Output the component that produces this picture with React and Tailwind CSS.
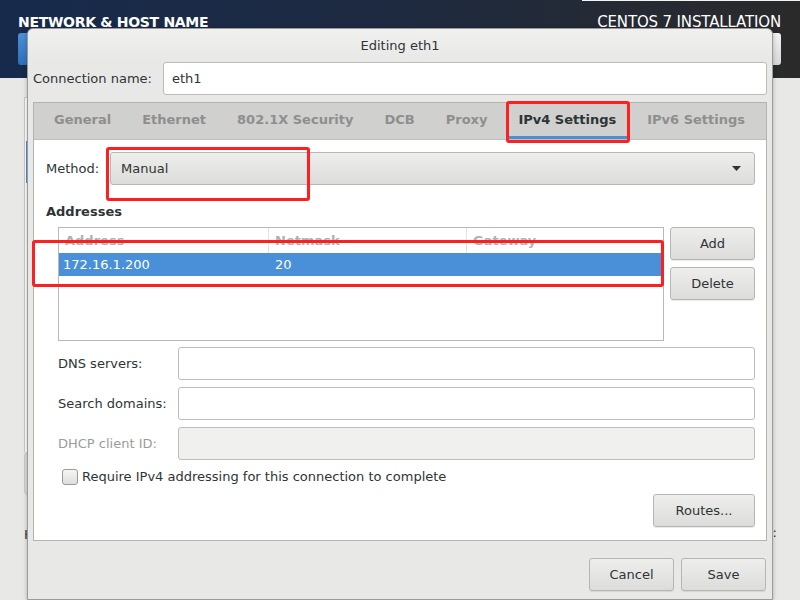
import { useState } from "react";

const tabs = ["General", "Ethernet", "802.1X Security", "DCB", "Proxy", "IPv4 Settings", "IPv6 Settings"];

function GtkButton({ children, className = "" }) {
    return (
        <button className={"h-[33px] rounded-[3px] border border-[#b6b6b3] bg-linear-to-b from-[#eeeeec] to-[#dcdcda] text-[13px] text-[#2e3436] shadow-[0_1px_0_rgba(0,0,0,0.08)] " + className}>
            {children}
        </button>
    );
}

function Field({ label, disabled }) {
    return (
        <div className="flex items-center h-[33px]">
            <span className={"w-[120px] text-[13px] " + (disabled ? "text-[#9a9c99]" : "text-[#2e3436]")}>{label}</span>
            <div className={"flex-1 h-full rounded-[3px] border border-[#bcbcb9] " + (disabled ? "bg-[#f0f0ef]" : "bg-white")}></div>
        </div>
    );
}

export default function App() {
    const [active] = useState("IPv4 Settings");

    return (
        <div className="relative w-[800px] h-[600px] overflow-hidden bg-[#e8e8e7] font-['DejaVu_Sans',sans-serif]">
            {/* anaconda header behind the dialog */}
            <div className="h-[78px] bg-linear-to-r from-[#172a4c] via-[#1e2a40] to-[#2a2a2a] flex flex-col">
                <div className="h-[1px] ml-[582px] bg-[#f4f4f4]"></div>
                <div className="flex justify-between pl-[18px] pr-[19px] pt-[12px]">
                    <div className="flex flex-col">
                        <span className="text-[14px] font-bold text-white leading-[18px] tracking-[-0.3px]">NETWORK &amp; HOST NAME</span>
                        <div className="mt-[2px] w-[80px] h-[32px] rounded-[3px] bg-linear-to-b from-[#4a90d9] to-[#2f6fb8]"></div>
                    </div>
                    <div className="flex flex-col items-end">
                        <span className="text-[15px] text-white leading-[18px] tracking-[-0.15px]">CENTOS 7 INSTALLATION</span>
                        <div className="mt-[2px] w-[80px] h-[32px] rounded-[3px] bg-linear-to-b from-[#f2f2f2] to-[#d6d6d6]"></div>
                    </div>
                </div>
            </div>

            {/* spoke content behind the dialog */}
            <div className="flex justify-between pl-[24px] pr-[23px] pt-[19px]">
                <div className="flex flex-col w-[60px]">
                    <div className="h-[355px] bg-white border-l border-t border-[#c9c9c7] flex flex-col">
                        <div className="mt-[43px] ml-[1px] w-[3px] h-[42px] bg-[#4a90d9]"></div>
                    </div>
                    <div className="h-[43px] rounded-[4px] bg-[#dcdcda] border border-[#c9c9c7]"></div>
                    <span className="mt-[30px] text-[13px] text-[#2e3436]">H</span>
                </div>
                <span className="self-end mb-[2px] text-[13px] text-[#2e3436]">:</span>
            </div>

            {/* Editing eth1 dialog */}
            <div className="absolute left-[27px] top-[28px] w-[746px] h-[572px] border border-[#9b9b99] rounded-t-[6px] bg-[#e8e8e7] flex flex-col shadow-[0_1px_4px_rgba(0,0,0,0.25)]">
                <div className="h-[33px] shrink-0 rounded-t-[6px] bg-linear-to-b from-[#f0f0ef] to-[#e8e8e7] flex items-center justify-center text-[13px] text-[#2e3436]">
                    Editing eth1
                </div>

                <div className="flex flex-col px-[5px]">
                    <div className="flex items-center h-[33px]">
                        <span className="w-[130px] text-[13px] text-[#2e3436]">Connection name:</span>
                        <div className="flex-1 h-full rounded-[3px] border border-[#bcbcb9] bg-white flex items-center px-[8px] text-[13px] text-[#2e3436]">eth1</div>
                    </div>

                    {/* notebook */}
                    <div className="mt-[7px] h-[439px] border border-[#b3b3b1] bg-white flex flex-col">
                        <div className="h-[37px] shrink-0 bg-[#d0d0cf] border-b border-[#c0c0be] flex gap-[7px] pl-[8px]">
                            {tabs.map((t) => (
                                <div
                                    key={t}
                                    className={
                                        "px-[12px] pt-[1px] flex items-center text-[13px] font-bold border-b-[3px] " +
                                        (t === active ? "text-[#2e3436] border-[#4a90d9]" : "text-[#8e8f8c] border-transparent")
                                    }
                                >
                                    {t}
                                </div>
                            ))}
                        </div>

                        <div className="flex flex-col pl-[12px] pr-[11px] pt-[12px]">
                            <div className="flex items-center h-[33px]">
                                <span className="w-[64px] text-[13px] text-[#2e3436]">Method:</span>
                                <div className="flex-1 h-full rounded-[3px] border border-[#b6b6b3] bg-linear-to-b from-[#eeeeec] to-[#dcdcda] flex items-center justify-between pl-[10px] pr-[13px] text-[13px] text-[#2e3436]">
                                    <span>Manual</span>
                                    <svg width="9" height="5" viewBox="0 0 9 5"><path d="M0 0h9L4.5 5z" fill="#2e3436" /></svg>
                                </div>
                            </div>

                            <span className="mt-[19px] text-[13px] font-bold text-[#2e3436] leading-[16px]">Addresses</span>

                            <div className="mt-[7px] ml-[12px] flex gap-[6px]">
                                <div className="w-[606px] h-[114px] border border-[#b8b8b6] bg-white flex flex-col">
                                    <div className="h-[25px] flex text-[13px] font-bold text-[#b0b1ae]">
                                        <div className="w-[210px] border-r border-[#e2e2e0] pl-[6px] flex items-center">Address</div>
                                        <div className="w-[198px] border-r border-[#e2e2e0] pl-[6px] flex items-center">Netmask</div>
                                        <div className="flex-1 pl-[6px] flex items-center">Gateway</div>
                                    </div>
                                    <div className="h-[23px] bg-[#4a90d9] flex text-[13px] text-white">
                                        <div className="w-[210px] pl-[4px] flex items-center">172.16.1.200</div>
                                        <div className="w-[198px] pl-[6px] flex items-center">20</div>
                                    </div>
                                </div>
                                <div className="w-[85px] flex flex-col gap-[7px]">
                                    <GtkButton>Add</GtkButton>
                                    <GtkButton>Delete</GtkButton>
                                </div>
                            </div>

                            <div className="mt-[6px] ml-[12px] flex flex-col gap-[7px]">
                                <Field label="DNS servers:" />
                                <Field label="Search domains:" />
                                <Field label="DHCP client ID:" disabled />
                            </div>

                            <label className="mt-[9px] ml-[16px] flex items-center gap-[4px] text-[13px] text-[#2e3436] h-[16px]">
                                <span className="w-[16px] h-[16px] rounded-[3px] border border-[#9a9a98] bg-linear-to-b from-[#f6f6f5] to-[#dededc]"></span>
                                Require IPv4 addressing for this connection to complete
                            </label>

                            <div className="mt-[9px] flex justify-end">
                                <GtkButton className="w-[102px]">Routes...</GtkButton>
                            </div>
                        </div>
                    </div>

                    <div className="mt-[17px] flex justify-end gap-[7px] pr-[1px]">
                        <GtkButton className="w-[85px]">Cancel</GtkButton>
                        <GtkButton className="w-[85px]">Save</GtkButton>
                    </div>
                </div>
            </div>

            {/* red annotation frames */}
            <div className="absolute left-[506px] top-[101px] w-[124px] h-[42px] border-[3px] border-[#fe2020] rounded-[3px]"></div>
            <div className="absolute left-[106px] top-[147px] w-[204px] h-[54px] border-[3px] border-[#fe2020] rounded-[3px]"></div>
            <div className="absolute left-[32px] top-[240px] w-[632px] h-[47px] border-[3px] border-[#fe2020] rounded-[3px]"></div>
        </div>
    );
}
